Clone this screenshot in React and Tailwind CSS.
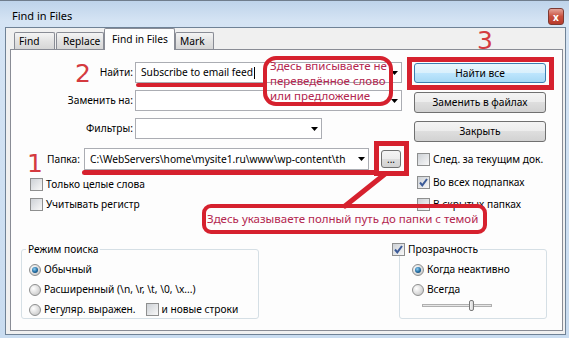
import React from 'react'

const Arrow = () => (
  <svg width="7" height="4" viewBox="0 0 7 4" className="shrink-0">
    <path d="M0 0h7L3.5 4z" fill="#000" />
  </svg>
)

const Combo = ({ className, text, cursor }) => (
  <div className={`flex items-center justify-between border border-[#abadb3] bg-white ${className}`}>
    <div className="flex items-center whitespace-nowrap pl-[5px]">
      {text}
      {cursor && <span className="ml-[1px] w-[1px] h-[12px] bg-black" />}
    </div>
    <div className="mr-[3px] ml-[2px] flex items-center">
      <Arrow />
    </div>
  </div>
)

const Btn = ({ children, def, className }) => (
  <div
    className={`flex items-center justify-center rounded-[3px] border ${
      def
        ? 'border-[#3c7fb1] bg-[linear-gradient(#eaf6fd_0%,#d9f0fc_50%,#bee6fd_50%,#a7d9f5_100%)]'
        : 'border-[#707070] bg-[linear-gradient(#f4f4f4_0%,#ececec_50%,#dedede_50%,#d2d2d2_100%)]'
    } ${className}`}
  >
    {children}
  </div>
)

const Check = ({ on }) => (
  <span className="relative w-[13px] h-[13px] shrink-0 border border-[#8e8f8f] bg-[linear-gradient(135deg,#cdd1d6,#f8f8f8)]">
    {on && (
      <svg width="11" height="11" viewBox="0 0 11 11" className="absolute left-0 top-0">
        <path d="M2 5.5 L4.3 8.3 L9 2" stroke="#3b5a98" strokeWidth="2" fill="none" />
      </svg>
    )}
  </span>
)

const Radio = ({ on }) => (
  <span className="w-[12px] h-[12px] shrink-0 rounded-full border border-[#8e8f8f] bg-[radial-gradient(circle_at_35%_35%,#ffffff,#d2d2d2_70%,#bcbcbc)] flex items-center justify-center">
    {on && <span className="w-[6px] h-[6px] rounded-full bg-[radial-gradient(circle_at_40%_35%,#8fd0f4,#1f6aa0_55%,#0b3354)]" />}
  </span>
)

const CheckRow = ({ on, children, className }) => (
  <div className={`flex items-center gap-[3px] ${className}`}>
    <Check on={on} />
    <span>{children}</span>
  </div>
)

const RadioRow = ({ on, children }) => (
  <div className="flex items-center gap-[3px] h-[19px]">
    <Radio on={on} />
    <span>{children}</span>
  </div>
)

export default function App() {
  return (
    <div className="relative w-[569px] h-[338px] overflow-hidden border-t border-[#707d8c] bg-[linear-gradient(180deg,#bed3ea_0%,#d5e4f4_6%,#c9dcf0_100%)] font-['Noto_Sans',sans-serif] text-[10.2px] leading-none text-black">
      {/* title bar */}
      <div className="flex h-[26px] justify-between pl-[12px] pr-[5px]">
        <span className="mt-[9px] text-[11px]">Find in Files</span>
        <span className="mt-[7px] w-[16px] h-[17px] rounded-[3px] border border-[#7d3a32] bg-[linear-gradient(#e4a49a,#c9503f_50%,#b83a2b)] flex items-center justify-center text-white text-[10px] font-bold">
          x
        </span>
      </div>

      {/* client area */}
      <div className="ml-[5px] mr-[3px] h-[308px] border border-[#6f8296] bg-[#f0f0f0]">
        {/* tabs */}
        <div className="flex items-end h-[21px]">
          <div className="ml-[8px] w-[41px] h-[17px] pl-[4px] flex items-center border border-b-0 border-[#898c95] rounded-t-[2px] bg-[linear-gradient(#f4f4f4,#e3e3e3_50%,#d6d6d6)]">
            Find
          </div>
          <div className="ml-[1px] w-[48px] h-[17px] pl-[6px] flex items-center border border-b-0 border-[#898c95] rounded-t-[2px] bg-[linear-gradient(#f4f4f4,#e3e3e3_50%,#d6d6d6)]">
            Replace
          </div>
          <div className="relative z-10 -mb-[1px] w-[71px] h-[22px] pl-[7px] flex items-center border border-b-0 border-[#898c95] rounded-t-[2px] bg-[#fdfdfd]">
            Find in Files
          </div>
          <div className="w-[39px] h-[17px] pl-[4px] flex items-center border border-b-0 border-[#898c95] rounded-t-[2px] bg-[linear-gradient(#f4f4f4,#e3e3e3_50%,#d6d6d6)]">
            Mark
          </div>
        </div>

        {/* panel */}
        <div className="ml-[4px] w-[553px] h-[282px] border border-[#898c95] bg-[#fdfdfd]">
          <div className="flex mt-[12px] h-[21px]">
            <div className="w-[403px] flex">
              <span className="w-[122px] self-center text-right">Найти:</span>
              <Combo className="ml-[2px] w-[267px]" text="Subscribe to email feed" cursor />
            </div>
            <Btn def className="mt-[1px] w-[132px] h-[20px]">Найти все</Btn>
          </div>

          <div className="flex mt-[7px] h-[21px]">
            <div className="w-[403px] flex">
              <span className="w-[122px] self-center text-right">Заменить на:</span>
              <Combo className="ml-[2px] w-[267px]" text="" />
            </div>
            <Btn className="mt-[2px] w-[132px] h-[21px]">Заменить в файлах</Btn>
          </div>

          <div className="flex mt-[7px] h-[21px]">
            <div className="w-[403px] flex">
              <span className="w-[122px] self-center text-right">Фильтры:</span>
              <Combo className="ml-[2px] w-[187px]" text="" />
            </div>
            <Btn className="mt-[3px] w-[132px] h-[21px]">Закрыть</Btn>
          </div>

          <div className="flex mt-[9px] h-[22px]">
            <div className="w-[406px] flex">
              <span className="ml-[36px] w-[36px] self-center">Папка:</span>
              <Combo className="ml-[1px] w-[285px]" text="C:\WebServers\home\mysite1.ru\www\wp-content\th" />
              <Btn className="ml-[12px] mt-[2px] w-[20px] h-[18px] text-[10px]">...</Btn>
            </div>
            <CheckRow className="mt-[5px] self-start">След. за текущим док.</CheckRow>
          </div>

          <div className="flex mt-[5px] h-[16px]">
            <div className="w-[406px] flex">
              <CheckRow className="ml-[19px] mt-[3px] self-start">Только целые слова</CheckRow>
            </div>
            <CheckRow on className="mt-[1px] self-start">Во всех подпапках</CheckRow>
          </div>

          <div className="flex mt-[7px] h-[13px]">
            <div className="w-[406px] flex">
              <CheckRow className="ml-[19px]">Учитывать регистр</CheckRow>
            </div>
            <CheckRow>В скрытых папках</CheckRow>
          </div>

          <div className="flex items-start mt-[31px]">
            <fieldset className="ml-[10px] w-[238px] h-[77px] border border-[#d5dfe5] rounded-[3px]">
              <legend className="ml-[4px] px-[2px] leading-[14px]">Режим поиска</legend>
              <div className="mt-[4px] ml-[7px] flex flex-col gap-[1px]">
                <RadioRow on>Обычный</RadioRow>
                <RadioRow>Расширенный (\n, \r, \t, \0, \x...)</RadioRow>
                <div className="flex items-center h-[19px]">
                  <RadioRow>Регуляр. выражен.</RadioRow>
                  <CheckRow className="ml-[10px]">и новые строки</CheckRow>
                </div>
              </div>
            </fieldset>

            <fieldset className="ml-[140px] w-[148px] h-[77px] border border-[#d5dfe5] rounded-[3px]">
              <legend className="-ml-[8px] pr-[2px] leading-[14px]">
                <span className="flex items-center gap-[3px] h-[14px]">
                  <Check on />
                  <span>Прозрачность</span>
                </span>
              </legend>
              <div className="mt-[4px] ml-[12px] flex flex-col gap-[1px]">
                <RadioRow on>Когда неактивно</RadioRow>
                <RadioRow>Всегда</RadioRow>
              </div>
              <div className="ml-[22px] h-[12px] flex items-center">
                <div className="relative w-[70px] h-[3px] border border-[#b0b0b0] bg-[#e6e6e6]">
                  <span className="absolute left-[46px] -top-[5px] w-[5px] h-[11px] rounded-[2px] border border-[#7a7a7a] bg-[linear-gradient(90deg,#f4f4f4,#d6d6d6)]" />
                </div>
              </div>
            </fieldset>
          </div>
        </div>
      </div>

      {/* red annotations over the dialog */}
      <div className="pointer-events-none absolute inset-0">
        <span className="absolute left-[477px] top-[27px] font-['DejaVu_Sans',sans-serif] text-[25px] leading-none text-[#d43a3f]">3</span>
        <span className="absolute left-[75px] top-[60px] font-['DejaVu_Sans',sans-serif] text-[25px] leading-none text-[#d43a3f]">2</span>
        <span className="absolute left-[27px] top-[150px] font-['DejaVu_Sans',sans-serif] text-[25px] leading-none text-[#d43a3f]">1</span>

        <span className="absolute left-[136px] top-[82px] w-[130px] h-[4px] rounded-full bg-[#d6212e]" />
        <div className="absolute left-[263px] top-[55px] w-[130px] h-[50px] rounded-[13px] border-4 border-[#d6212e] pl-[3px] text-[11.5px] leading-[15px] text-[#b3264f]">
          <div className="-mt-[2px]">
            <div>Здесь вписываете не</div>
            <div>переведённое слово</div>
            <div>или предложение</div>
          </div>
        </div>

        <span className="absolute left-[407px] top-[56px] w-[147px] h-[33px] border-[5px] border-[#d6212e]" />

        <span className="absolute left-[82px] top-[169px] w-[294px] h-[5px] rounded-l-full bg-[#d6212e]" />
        <span className="absolute left-[374px] top-[140px] w-[35px] h-[35px] border-[5px] border-[#d6212e]" />
        <svg width="569" height="338" className="absolute left-0 top-0">
          <line x1="385" y1="173" x2="345" y2="205" stroke="#d6212e" strokeWidth="5" strokeLinecap="round" />
        </svg>
        <div className="absolute left-[202px] top-[203px] w-[285px] h-[30px] rounded-[9px] border-4 border-[#d6212e] pl-[1px] flex items-center text-[11.5px] text-[#b3264f] whitespace-nowrap">
          Здесь указываете полный путь до папки с темой
        </div>
      </div>
    </div>
  )
}
